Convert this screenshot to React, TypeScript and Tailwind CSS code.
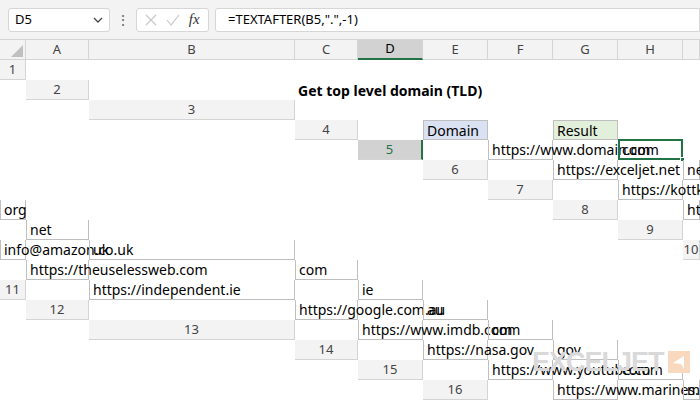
import React from "react";

const cols = ["A", "B", "C", "D", "E", "F", "G", "H", ""];
const data: [string, string][] = [
  ["https://www.domain.com", "com"],
  ["https://exceljet.net", "net"],
  ["https://kottke.org", "org"],
  ["https://wumbo.net", "net"],
  ["info@amazon.co.uk", "uk"],
  ["https://theuselessweb.com", "com"],
  ["https://independent.ie", "ie"],
  ["https://google.com.au", "au"],
  ["https://www.imdb.com", "com"],
  ["https://nasa.gov", "gov"],
  ["https://www.youtube.com", "com"],
  ["https://www.marines.mil", "mil"],
];

export default function App() {
  const rows = Array.from({ length: 17 }, (_, i) => i + 1);
  return (
    <div className="relative w-[700px] h-[400px] overflow-hidden bg-white text-black" style={{ fontFamily: '"Noto Sans", sans-serif' }}>
      <div className="h-[40px] bg-[#f3f3f3] flex items-center gap-[6px] px-[8px] border-b border-[#d4d4d4]">
        <div className="w-[102px] h-[24px] bg-white border border-[#d6d6d6] rounded-[3px] flex items-center justify-between px-[6px] text-[13px]">
          <span>D5</span>
          <svg width="10" height="6" viewBox="0 0 10 6"><path d="M1 1l4 4 4-4" stroke="#444" fill="none" strokeWidth="1.3" /></svg>
        </div>
        <div className="text-[#666] text-[14px] leading-none">⋮</div>
        <div className="w-[73px] h-[24px] bg-white border border-[#d6d6d6] rounded-[3px] flex items-center justify-around px-[4px]">
          <svg width="12" height="12" viewBox="0 0 12 12"><path d="M1 1l10 10M11 1L1 11" stroke="#c8c8c8" strokeWidth="1.2" /></svg>
          <svg width="14" height="12" viewBox="0 0 14 12"><path d="M1 6l4 5 8-10" stroke="#c8c8c8" strokeWidth="1.2" fill="none" /></svg>
          <span className="italic text-[15px] text-[#333]" style={{ fontFamily: '"Liberation Serif", serif' }}>fx</span>
        </div>
        <div className="flex-1 h-[24px] bg-white border border-[#d6d6d6] rounded-l-[3px] flex items-center px-[12px] text-[13px] mr-[-8px]">
          =TEXTAFTER(B5,".",-1)
        </div>
      </div>
      <div className="grid grid-cols-[26px_63px_206px_63px_65px_65px_65px_65px_65px_17px] auto-rows-[20px] text-[14px]">
        <div className="bg-[#f3f3f3] border-r border-b border-[#d4d4d4] relative">
          <div className="absolute right-[2px] bottom-[2px] w-0 h-0 border-l-[12px] border-l-transparent border-b-[12px] border-b-[#c0c0c0]" />
        </div>
        {cols.map((c, i) => (
          <div key={i} className={`flex items-center justify-center text-[13px] border-r border-b ${c === "D" ? "bg-[#d2d2d2] border-b-2 border-b-[#217346] text-[#000]" : "bg-[#f3f3f3] border-b-[#d4d4d4] text-[#444]"} border-r-[#d4d4d4]`}>{c}</div>
        ))}
        {rows.map((r) => {
          const d = r >= 5 && r <= 16 ? data[r - 5] : null;
          return (
            <React.Fragment key={r}>
              <div className={`flex items-center justify-center text-[13px] border-b border-[#d4d4d4] ${r === 5 ? "bg-[#d2d2d2] text-[#217346] border-r-2 border-r-[#217346]" : "bg-[#f3f3f3] text-[#444] border-r"}`}>{r}</div>
              <div />
              <div className={`flex items-center px-[3px] whitespace-nowrap ${r === 2 ? "font-bold" : ""} ${r === 4 ? "bg-[#d9e1f2] border border-[#bfbfbf]" : ""} ${d ? "border-x border-b border-[#bfbfbf]" : ""}`}>
                {r === 2 ? "Get top level domain (TLD)" : r === 4 ? "Domain" : d ? d[0] : ""}
              </div>
              <div />
              <div className={`relative flex items-center px-[3px] ${r === 4 ? "bg-[#e2efda] border border-[#bfbfbf]" : ""} ${d ? "border-x border-b border-[#bfbfbf]" : ""}`}>
                {r === 4 ? "Result" : d ? d[1] : ""}
                {r === 5 && (
                  <>
                    <div className="absolute -left-[1px] -top-[1px] -right-[1px] -bottom-[1px] border-2 border-[#217346]" />
                    <div className="absolute -right-[3px] -bottom-[3px] w-[5px] h-[5px] bg-[#217346] border border-white" />
                  </>
                )}
              </div>
              <div /><div /><div /><div /><div /><div />
            </React.Fragment>
          );
        })}
      </div>
      <div className="absolute left-[532px] top-[342px] flex items-center gap-[4px]">
        <span className="text-[27px] font-black tracking-[-1px] text-[#d9d9d9]" style={{ fontFamily: '"Liberation Sans", sans-serif' }}>EXCELJET</span>
        <svg width="22" height="22" viewBox="0 0 22 22"><rect width="22" height="22" fill="#f8d9c0" /><path d="M16 5L5 12l8 1 3 5z" fill="#fff" /></svg>
      </div>
    </div>
  );
}
